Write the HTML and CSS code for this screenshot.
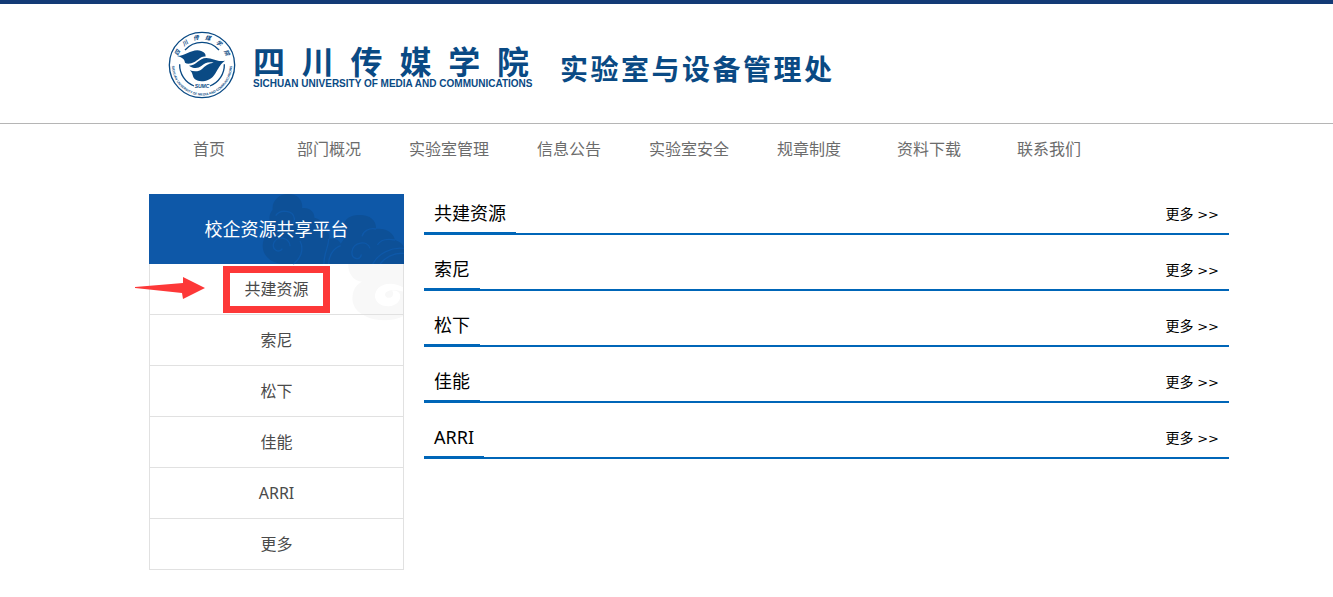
FILE: index.html
```html
<!DOCTYPE html>
<html lang="zh-CN">
<head>
    <meta charset="UTF-8">
    <meta name="viewport" content="width=device-width, initial-scale=1.0">
    <title>实验室与设备管理处</title>
    <link rel="stylesheet" href="styles.css">
</head>
<body>
    <header>
        <a href="#" class="logo">
            <svg class="seal" viewBox="53 34 204 204" aria-hidden="true">
                <defs>
                    <path id="arcTop" d="M78 136 A77 77 0 0 1 232 136"/>
                    <path id="arcBottom" d="M66 124 A90 90 0 1 0 244 124"/>
                </defs>
                <circle cx="155" cy="136" r="98" fill="none" stroke="#0a4a84" stroke-width="4"/>
                <path d="M104 91 A68 68 0 0 1 206 91 M88 134 A68 68 0 0 0 131 199 M222 134 A68 68 0 0 1 179 199" fill="none" stroke="#0a4a84" stroke-width="4"/>
                <path class="ink" d="M80 109 C106 109 119 92 141 92 C158 93 169 103 165 111 C150 109 140 127 123 131 C114 133 108 132 104 129 C103 119 95 112 80 109 Z"/>
                <path class="ink" d="M116 138 C139 138 145 115 168 115 C188 115 199 128 224 123 C205 136 202 154 190 168 C179 184 149 190 134 179 C125 172 129 159 118 152 C133 157 146 156 156 147 C164 138 174 131 190 129 C173 125 163 131 153 139 C143 147 128 147 116 138 Z"/>
                <text class="seal-cn"><textPath href="#arcTop" startOffset="50%" text-anchor="middle">四&emsp;川&emsp;传&emsp;媒&emsp;学&emsp;院</textPath></text>
                <text class="seal-en"><textPath href="#arcBottom" startOffset="50%" text-anchor="middle">SICHUAN UNIVERSITY OF MEDIA AND COMMUNICATIONS</textPath></text>
                <text class="seal-abbr" x="155" y="205" text-anchor="middle">SUMC</text>
            </svg>
            <span class="school">
                <span class="school-cn">四 川 传 媒 学 院</span>
                <span class="school-en">SICHUAN UNIVERSITY OF MEDIA AND COMMUNICATIONS</span>
            </span>
            <span class="office">实验室与设备管理处</span>
        </a>
    </header>
    <nav>
        <a href="#">首页</a>
        <a href="#">部门概况</a>
        <a href="#">实验室管理</a>
        <a href="#">信息公告</a>
        <a href="#">实验室安全</a>
        <a href="#">规章制度</a>
        <a href="#">资料下载</a>
        <a href="#">联系我们</a>
    </nav>
    <div class="content">
        <aside>
            <h2>校企资源共享平台</h2>
            <ul>
                <li><a href="#">共建资源</a></li>
                <li><a href="#">索尼</a></li>
                <li><a href="#">松下</a></li>
                <li><a href="#">佳能</a></li>
                <li><a href="#">ARRI</a></li>
                <li><a href="#">更多</a></li>
            </ul>
            <svg class="cloud" viewBox="390 27 432 380" aria-hidden="true">
                <path fill="#0d5097" d="M461 237 C420 235 398 210 398 182 C398 155 418 137 444 137 C420 125 409 96 428 74 C425 48 447 27 474 27 C505 27 520 48 516 70 C536 66 554 80 553 98 C577 102 583 124 571 142 C592 132 603 147 596 162 C614 157 628 166 632 176 C642 165 652 148 644 128 C636 106 660 88 690 90 C722 90 740 108 738 132 C765 128 790 142 795 165 C810 170 822 180 822 190 L822 237 Z"/>
                <path class="line-dark" d="M437 92 C450 72 490 75 493 100 C495 126 462 126 461 108 M480 184 C480 160 446 148 432 172 C423 194 448 207 457 191 M510 168 C524 195 510 222 490 237 M596 162 C596 185 580 210 582 237 M632 182 C608 190 596 215 596 237 M720 190 C712 165 670 170 666 200 C664 224 692 228 694 208 M738 132 C718 128 700 138 696 154 M795 165 C770 160 750 166 742 180 M822 190 C785 185 745 205 728 237 M822 205 C790 202 763 220 750 237"/>
                <path fill="#f8f8f8" d="M655 237 L822 237 L822 392 C790 410 740 411 705 393 C670 375 662 350 670 320 C676 302 689 294 696 290 C672 290 653 265 655 237 Z"/>
                <path fill="white" d="M822 308 C775 282 733 303 735 337 C741 368 792 374 808 346 C817 325 802 313 786 317 C795 326 786 342 772 338 C756 330 767 304 822 320 Z"/>
            </svg>
            <svg class="arrow" viewBox="0 0 70 24" aria-hidden="true">
                <path fill="#fd3838" d="M0 11 L48 7 L48 1 L70 12 L48 23 L47 17 L0 12 Z"/>
            </svg>
            <div class="mark"></div>
        </aside>
        <main>
            <section>
                <h3>共建资源</h3>
                <a href="#">更多 <span>&gt;&gt;</span></a>
            </section>
            <section>
                <h3>索尼</h3>
                <a href="#">更多 <span>&gt;&gt;</span></a>
            </section>
            <section>
                <h3>松下</h3>
                <a href="#">更多 <span>&gt;&gt;</span></a>
            </section>
            <section>
                <h3>佳能</h3>
                <a href="#">更多 <span>&gt;&gt;</span></a>
            </section>
            <section>
                <h3>ARRI</h3>
                <a href="#">更多 <span>&gt;&gt;</span></a>
            </section>
        </main>
    </div>
</body>
</html>
```
FILE: styles.css
```css
*{
    margin: 0;
    padding: 0;
    box-sizing: border-box;
}
body{
    font-family: "Noto Sans", "Noto Sans CJK SC", sans-serif;
    font-size: 16px;
    background-color: white;
    color: black;
}
a{
    text-decoration: none;
    color: inherit;
}
ul{
    list-style: none;
}
header{
    border-top: 4px solid #133a76;
    border-bottom: 1px solid #b5b5b5;
    padding: 27px 104px 24px 168px;
}
.logo{
    display: flex;
    align-items: flex-start;
    color: #0a4a84;
}
/* Logo */
.seal{
    width: 68px;
    height: 68px;
    flex: none;
}
.ink{
    fill: #0a4a84;
}
.seal text{
    fill: #0a4a84;
    font-weight: bold;
}
.seal-cn{
    font-family: "Noto Sans CJK SC", sans-serif;
    font-size: 17px;
    font-style: italic;
}
.seal-en{
    font-family: "Liberation Sans", sans-serif;
    font-size: 10px;
}
.seal-abbr{
    font-family: "Liberation Sans", sans-serif;
    font-size: 15px;
    font-style: italic;
}
.school{
    display: flex;
    flex-direction: column;
    width: 276px;
    margin: 11px 0 0 17px;
}
.school-cn{
    font-family: "Noto Sans CJK SC", sans-serif;
    font-size: 32px;
    font-weight: bold;
    line-height: 36px;
    text-align-last: justify;
}
.school-en{
    font-family: "Liberation Sans", sans-serif;
    font-size: 10px;
    font-weight: bold;
    line-height: 12px;
    white-space: nowrap;
}
.office{
    width: 272px;
    margin: 17px 0 0 31px;
    font-family: "Noto Sans CJK SC", sans-serif;
    font-size: 28px;
    font-weight: bold;
    line-height: 40px;
    text-align-last: justify;
}
/* Menu */
nav{
    display: flex;
    padding: 0 104px 0 149px;
    color: #6c6c6c;
}
nav a{
    flex: 0 1 120px;
    line-height: 50px;
    text-align: center;
}
.content{
    display: flex;
    gap: 20px;
    padding: 20px 104px 20px 149px;
}
/* Sidebar */
aside{
    flex: 0 0 255px;
    position: relative;
    isolation: isolate;
    background: linear-gradient(#0e58a8 70px, white 70px);
}
aside h2{
    color: white;
    font-size: 18px;
    font-weight: normal;
    line-height: 70px;
    text-align: center;
}
aside ul{
    border: 1px solid #e1e1e1;
    border-top: none;
    border-bottom: none;
}
aside li{
    border-bottom: 1px solid #e1e1e1;
    line-height: 50px;
    text-align: center;
    color: #4a4a4a;
}
.cloud{
    position: absolute;
    top: 0;
    right: 0;
    width: 144px;
    z-index: -1;
}
.line-dark{
    fill: none;
    stroke: #0e58a8;
    stroke-width: 4;
}
.arrow{
    position: absolute;
    top: 82px;
    left: -14px;
    width: 70px;
}
.mark{
    position: absolute;
    top: 72px;
    left: 74px;
    width: 107px;
    height: 47px;
    border: 7px solid #fd3838;
}
/* Lists */
main{
    flex: 1 1 500px;
}
section{
    display: flex;
    justify-content: space-between;
    height: 41px;
    margin-bottom: 15px;
    border-bottom: 2px solid #0066b8;
}
section h3{
    height: 41px;
    padding: 0 10px;
    border-bottom: 3px solid #0066b8;
    font-size: 18px;
    font-weight: normal;
    line-height: 38px;
}
section a{
    padding-right: 10px;
    font-size: 14px;
    line-height: 40px;
}
section a span{
    font-family: "DejaVu Sans", sans-serif;
    font-size: 13px;
}
```
